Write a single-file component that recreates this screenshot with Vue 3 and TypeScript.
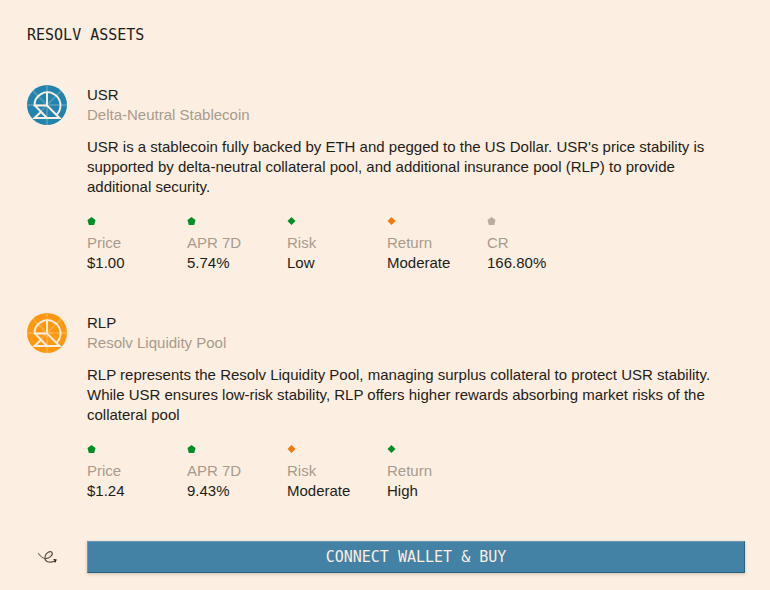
<script setup lang="ts">
type Shape = 'pentagon' | 'diamond'
type Tone = 'good' | 'medium' | 'neutral'

interface Metric {
  label: string
  value: string
  shape: Shape
  tone: Tone
}

interface Asset {
  symbol: string
  name: string
  description: string
  theme: string
  metrics: Metric[]
}

const assets: Asset[] = [
  {
    symbol: 'USR',
    name: 'Delta-Neutral Stablecoin',
    description:
      "USR is a stablecoin fully backed by ETH and pegged to the US Dollar. USR's price stability is supported by delta-neutral collateral pool, and additional insurance pool (RLP) to provide additional security.",
    theme: 'blue',
    metrics: [
      { label: 'Price', value: '$1.00', shape: 'pentagon', tone: 'good' },
      { label: 'APR 7D', value: '5.74%', shape: 'pentagon', tone: 'good' },
      { label: 'Risk', value: 'Low', shape: 'diamond', tone: 'good' },
      { label: 'Return', value: 'Moderate', shape: 'diamond', tone: 'medium' },
      { label: 'CR', value: '166.80%', shape: 'pentagon', tone: 'neutral' },
    ],
  },
  {
    symbol: 'RLP',
    name: 'Resolv Liquidity Pool',
    description:
      'RLP represents the Resolv Liquidity Pool, managing surplus collateral to protect USR stability. While USR ensures low-risk stability, RLP offers higher rewards absorbing market risks of the collateral pool',
    theme: 'orange',
    metrics: [
      { label: 'Price', value: '$1.24', shape: 'pentagon', tone: 'good' },
      { label: 'APR 7D', value: '9.43%', shape: 'pentagon', tone: 'good' },
      { label: 'Risk', value: 'Moderate', shape: 'diamond', tone: 'medium' },
      { label: 'Return', value: 'High', shape: 'diamond', tone: 'good' },
    ],
  },
]

const markerPoints: Record<Shape, string> = {
  pentagon: '4.5,0 8.5,3 7.2,8 1.8,8 0.5,3',
  diamond: '4.5,0 8.5,4 4.5,8 0.5,4',
}
</script>

<template>
  <main class="page">
    <h1 class="title">RESOLV ASSETS</h1>

    <div class="assets">
      <section v-for="asset in assets" :key="asset.symbol" class="row">
        <svg class="logo" :class="asset.theme" viewBox="0 0 40 40" aria-hidden="true">
          <circle class="disc" cx="20" cy="20" r="20" />
          <path
            class="rays"
            d="M20 0V40M0 20H40M5.900 5.900L34.100 34.100M34.100 5.900L5.900 34.100"
          />
          <path
            class="mark"
            d="M20 7V20.500H7.500A13 13 0 1 1 28.500 30.500M8 20.500L20 33M20 20.500L32.500 33H7.500L14.500 26.500"
          />
        </svg>
        <div class="details">
          <h2 class="symbol">{{ asset.symbol }}</h2>
          <p class="muted">{{ asset.name }}</p>
          <p class="description">{{ asset.description }}</p>
          <dl class="metrics">
            <div v-for="metric in asset.metrics" :key="metric.label" class="metric">
              <dt class="muted">
                <svg class="marker" :class="metric.tone" viewBox="0 0 9 8" aria-hidden="true">
                  <polygon :points="markerPoints[metric.shape]" />
                </svg>
                {{ metric.label }}
              </dt>
              <dd>{{ metric.value }}</dd>
            </div>
          </dl>
        </div>
      </section>

      <div class="row action">
        <svg class="squiggle" viewBox="0 0 40 32" aria-hidden="true">
          <path class="thin" d="M11.500 12.500C13.500 15 15 17 18 17.500" />
          <path d="M18 17.500C22 18 26.500 14 25 11.500C23.500 9 18.500 12 18 16C17.500 21 22 22.500 28 20" />
          <path class="head" d="M27 18.500L29 19L28 21" />
        </svg>
        <button type="button" class="connect">CONNECT WALLET &amp; BUY</button>
      </div>
    </div>
  </main>
</template>

<style>
body {
  background: #fceee0;
}
</style>

<style scoped>
.page {
  padding: 25px 25px 16px 27px;
  color: #231d1a;
  font: 15px/20px "Liberation Sans", sans-serif;
}

h1,
h2,
p,
dl,
dd {
  margin: 0;
  font-size: inherit;
  font-weight: 400;
}

.title {
  margin-bottom: 40px;
  font-family: "DejaVu Sans Mono", monospace;
}

.assets {
  display: grid;
  gap: 40px;
}

.row {
  display: grid;
  grid-template-columns: 40px minmax(0, 1fr);
  gap: 20px;
  align-items: start;
}

.logo {
  display: block;
  width: 40px;
  height: 40px;
}

.logo path {
  fill: none;
  stroke: #fceee0;
}

.blue .disc {
  fill: #2283ad;
}

.orange .disc {
  fill: #ff980f;
}

.logo .rays {
  stroke-width: 2;
  opacity: 0.2;
}

.mark {
  stroke-width: 1.9;
}

.muted {
  color: #a79b8e;
}

.description {
  margin-top: 12px;
  padding-right: 16px;
}

.metrics {
  display: flex;
  flex-wrap: wrap;
  margin-top: 20px;
}

.metric {
  width: 100px;
}

.marker {
  display: block;
  width: 9px;
  height: 8px;
  margin-bottom: 8px;
}

.good {
  fill: #008f24;
}

.medium {
  fill: #f27b0a;
}

.neutral {
  fill: #b9aca0;
}

.action {
  align-items: center;
}

.squiggle {
  display: block;
  width: 40px;
  height: 32px;
  fill: none;
  stroke: #5c5047;
  stroke-width: 1.2;
  stroke-linecap: round;
}

.thin {
  opacity: 0.7;
}

.squiggle .head {
  fill: #31251f;
  stroke: #31251f;
}

.connect {
  height: 32px;
  padding: 0 16px;
  border: 1px solid;
  border-color: #6999b2 #2a617f #2a617f #6999b2;
  border-radius: 0;
  background: #4381a5;
  box-shadow: 0 1px 3px rgb(67 50 35 / 25%);
  color: #fceee0;
  font: 15px/20px "DejaVu Sans Mono", monospace;
  cursor: pointer;
}
</style>
